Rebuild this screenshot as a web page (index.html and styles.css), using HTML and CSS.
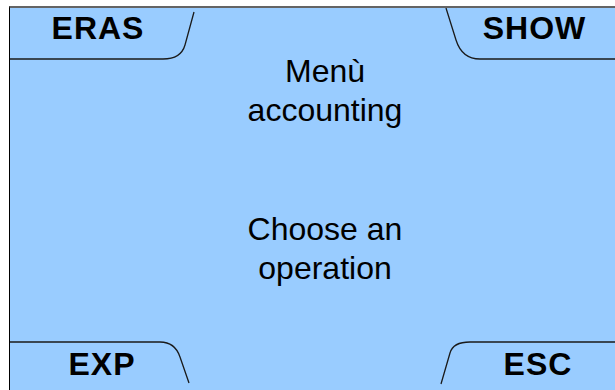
FILE: index.html
```html
<!DOCTYPE html>
<html lang="it">
<head>
  <meta charset="UTF-8" />
  <title>Menù accounting</title>
  <link rel="stylesheet" href="styles.css">
</head>
<body>
  <div class="screen">
    <!-- contorni dei tasti funzione -->
    <svg class="outline" width="630" height="382" viewBox="0 0 630 382">
      <path d="M0,51 H153 Q171,51 175,37 L184,4" />
      <path d="M436,0 L446,32 Q452,51 470,51 H630" />
      <path d="M0,334 H150 Q165,334 170,349 L179,375" />
      <path d="M630,334 H460 Q443,334 440,345 L431,376" />
    </svg>

    <div class="keys">
      <span class="key key-left">ERAS</span>
      <span class="key key-right">SHOW</span>
    </div>

    <p class="message first">Menù<br>accounting</p>
    <p class="message second">Choose an<br>operation</p>

    <div class="keys bottom">
      <span class="key key-exp">EXP</span>
      <span class="key key-esc">ESC</span>
    </div>
  </div>
</body>
</html>
```

FILE: styles.css
```css
html, body {
  margin: 0;
  background: #fff;
  overflow: hidden;
}
body {
  font-family: "Liberation Sans", Arial, sans-serif;
  color: #000;
}
.screen {
  position: relative;
  width: 630px;
  height: 382px;
  margin: 6px 0 0 9px;
  border-top: 2px solid #646464;
  border-left: 1px solid #000;
  background: #99ccff;
  display: flex;
  flex-direction: column;
}
.outline {
  position: absolute;
  left: 0;
  top: 0;
}
.outline path {
  fill: none;
  stroke: #1a1a1a;
  stroke-width: 1.3;
}
.keys {
  display: flex;
  justify-content: space-between;
  padding-top: 3px;
}
.keys.bottom {
  margin-top: auto;
  padding-top: 0;
  padding-bottom: 9px;
}
.key {
  font-size: 32px;
  font-weight: bold;
  line-height: 34px;
  letter-spacing: 1px;
  padding-left: 1px;
  text-align: center;
  box-sizing: border-box;
}
.key-left { width: 175px; }
.key-right { width: 212px; }
.key-exp { width: 183px; }
.key-esc { width: 205px; }
.message {
  margin: 0;
  font-size: 32px;
  line-height: 39px;
  text-align: center;
}
.message.first {
  margin-top: 7px;
}
.message.second {
  margin-top: 80px;
}
```
